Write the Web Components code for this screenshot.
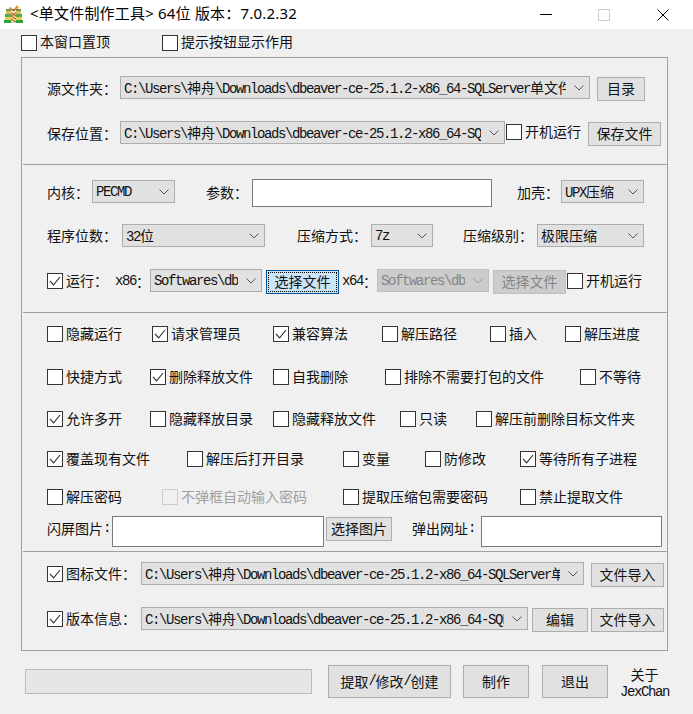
<!DOCTYPE html>
<html lang="zh"><head><meta charset="utf-8"><title>单文件制作工具</title>
<style>
html,body{margin:0;padding:0;background:#f0f0f0}
body{width:693px;height:714px;overflow:hidden;font:14px/20px "Liberation Mono","Noto Sans CJK SC",monospace;letter-spacing:-1.4px;color:#111}
</style></head><body>
<x-titlebar>&lt;单文件制作工具&gt; 64位 版本：7.0.2.32</x-titlebar>
<x-row style="margin:6px 0 6px 21px;height:16px;--lift:2px">
 <x-check style="width:141px">本窗口置顶</x-check><x-check>提示按钮显示作用</x-check>
</x-row>
<x-panel>
 <x-section style="padding-top:18px;padding-bottom:18px" line>
  <x-row><x-label style="width:73px;height:25px">源文件夹：</x-label><x-combo style="width:470px">C:\Users\神舟\Downloads\dbeaver-ce-25.1.2-x86_64-SQLServer单文件</x-combo><x-btn style="width:48px;margin:1px 0 0 7px">目录</x-btn></x-row>
  <x-row style="margin-top:20px"><x-label style="width:73px;height:25px">保存位置：</x-label><x-combo style="width:385px">C:\Users\神舟\Downloads\dbeaver-ce-25.1.2-x86_64-SQ</x-combo><x-check style="width:82px;margin:3px 0 0 1px">开机运行</x-check><x-btn style="width:73px;margin-top:1px">保存文件</x-btn></x-row>
 </x-section>
 <x-section style="padding-top:14px;padding-bottom:18px" line>
  <x-row><x-label style="width:45px;height:27px">内核：</x-label><x-combo style="width:83px;margin-top:1px">PECMD</x-combo><x-label style="width:46px;height:27px;margin-left:31px">参数：</x-label><x-input style="width:240px;height:28px"></x-input><x-label style="width:44px;height:27px;margin-left:25px">加壳：</x-label><x-combo style="width:83px;margin-top:1px">UPX压缩</x-combo></x-row>
  <x-row style="margin-top:17px"><x-label style="width:75px;height:24px">程序位数：</x-label><x-combo style="width:143px">32位</x-combo><x-label style="width:74px;height:24px;margin-left:32px">压缩方式：</x-label><x-combo style="width:62px">7z</x-combo><x-label style="width:74px;height:24px;margin-left:30px">压缩级别：</x-label><x-combo style="width:107px">极限压缩</x-combo></x-row>
  <x-row style="margin-top:21px"><x-check checked style="width:68px;margin-top:4px">运行：</x-check><x-label style="width:35px;height:25px">x86：</x-label><x-combo style="width:112px">Softwares\db</x-combo><x-btn focus style="width:73px;margin:1px 0 0 4px">选择文件</x-btn><x-label style="width:35px;height:25px;margin-left:3px">x64：</x-label><x-combo disabled style="width:112px">Softwares\db</x-combo><x-btn disabled style="width:73px;margin:1px 0 0 4px">选择文件</x-btn><x-check style="width:75px;margin:4px 0 0 1px">开机运行</x-check></x-row>
 </x-section>
 <x-section style="padding-top:13px;padding-bottom:4px" line>
  <x-row><x-check style="width:105px">隐藏运行</x-check><x-check checked style="width:121px">请求管理员</x-check><x-check checked style="width:109px">兼容算法</x-check><x-check style="width:108px">解压路径</x-check><x-check style="width:75px">插入</x-check><x-check>解压进度</x-check></x-row>
  <x-row style="margin-top:27px"><x-check style="width:103px">快捷方式</x-check><x-check checked style="width:123px">删除释放文件</x-check><x-check style="width:112px">自我删除</x-check><x-check style="width:195px">排除不需要打包的文件</x-check><x-check>不等待</x-check></x-row>
  <x-row style="margin-top:26px"><x-check checked style="width:103px">允许多开</x-check><x-check style="width:123px">隐藏释放目录</x-check><x-check style="width:127px">隐藏释放文件</x-check><x-check style="width:76px">只读</x-check><x-check>解压前删除目标文件夹</x-check></x-row>
  <x-row style="margin-top:24px"><x-check checked style="width:140px">覆盖现有文件</x-check><x-check style="width:156px">解压后打开目录</x-check><x-check style="width:82px">变量</x-check><x-check style="width:95px">防修改</x-check><x-check checked>等待所有子进程</x-check></x-row>
  <x-row style="margin-top:22px"><x-check style="width:115px">解压密码</x-check><x-check disabled style="width:181px">不弹框自动输入密码</x-check><x-check style="width:177px">提取压缩包需要密码</x-check><x-check>禁止提取文件</x-check></x-row>
  <x-row style="margin-top:11px"><x-label style="width:65px;height:26px">闪屏图片:</x-label><x-input style="width:212px;height:31px"></x-input><x-btn style="width:66px;margin:1px 0 0 2px">选择图片</x-btn><x-label style="width:69px;height:26px;margin-left:20px">弹出网址:</x-label><x-input style="width:181px;height:31px"></x-input></x-row>
 </x-section>
 <x-section style="padding-top:10px;padding-bottom:18px">
  <x-row><x-check checked style="width:94px;margin-top:4px">图标文件：</x-check><x-combo style="width:443px">C:\Users\神舟\Downloads\dbeaver-ce-25.1.2-x86_64-SQLServer单</x-combo><x-btn style="width:73px;margin:1px 0 0 7px">文件导入</x-btn></x-row>
  <x-row style="margin-top:20px"><x-check checked style="width:94px;margin-top:4px">版本信息：</x-check><x-combo style="width:387px">C:\Users\神舟\Downloads\dbeaver-ce-25.1.2-x86_64-SQL</x-combo><x-btn style="width:56px;margin:1px 0 0 4px">编辑</x-btn><x-btn style="width:73px;margin:1px 0 0 3px">文件导入</x-btn></x-row>
 </x-section>
</x-panel>
<x-row style="margin:14px 0 0 25px"><x-progress style="width:287px;margin-top:4px"></x-progress><x-btn style="width:123px;height:33px;margin-left:16px">提取/修改/创建</x-btn><x-btn style="width:66px;height:33px;margin-left:12px">制作</x-btn><x-btn style="width:66px;height:33px;margin-left:13px">退出</x-btn><x-about style="margin:1px 0 0 12px">关于<br>JexChan</x-about></x-row>
<script>
const shell=(el,css,html='<slot></slot>')=>{const r=el.attachShadow({mode:'open'});r.innerHTML='<style>'+css+'</style>'+html;return r};
const zhify=el=>{for(const n of [...el.childNodes]){if(n.nodeType!==3)continue;const f=document.createDocumentFragment();
  n.data.split(/([^\x00-\x7f]+)/).forEach((p,i)=>{if(!p)return;if(i%2){const z=document.createElement('x-zh');z.textContent=p;f.append(z)}else f.append(p)});n.replaceWith(f)}};
class Zh extends HTMLElement{constructor(){super();shell(this,':host{font-family:"Noto Sans CJK SC","Noto Sans CJK JP",sans-serif;font-size:14px;letter-spacing:0}')}}
class Plain extends HTMLElement{css(){return ''} html(){return undefined}
  connectedCallback(){if(this.shadowRoot)return;zhify(this);shell(this,this.css(),this.html())}}
class Row extends Plain{css(){return ':host{display:flex;align-items:flex-start}'}}
class Panel extends Plain{css(){return ':host{display:block;box-sizing:border-box;margin-left:21px;width:647px;height:594px;border:1px solid #a0a0a0}'}}
class Section extends Plain{css(){return ':host{display:block;margin-left:1px;padding-left:24px;box-sizing:border-box}:host([line]){border-bottom:1px solid #a0a0a0}'}}
class Label extends Plain{css(){return ':host{display:flex;align-items:center;flex:none;box-sizing:border-box;padding-bottom:2px;white-space:nowrap}'}}
class Btn extends Plain{css(){return `:host{display:flex;align-items:center;justify-content:center;flex:none;box-sizing:border-box;height:24px;padding-bottom:2px;background:#e1e1e1;border:1px solid #adadad;white-space:nowrap;position:relative}
  :host([disabled]){background:#ccc;border-color:#bfbfbf;color:#858585}
  :host([focus]){background:#cce4f7;border-color:#005499}
  :host([focus])::after{content:"";position:absolute;inset:1px;border:1px dotted #000}`}}
class Input extends Plain{css(){return ':host{display:block;flex:none;box-sizing:border-box;background:#fff;border:1px solid #7a7a7a}'}}
class Progress extends Plain{css(){return ':host{display:block;flex:none;box-sizing:border-box;height:25px;background:#e6e6e6;border:1px solid #bcbcbc}'}}
class Combo extends Plain{css(){return `:host{display:flex;align-items:center;flex:none;box-sizing:border-box;height:23px;padding:0 5px 0 3px;background:#e1e1e1;border:1px solid #adadad}
  :host([disabled]){background:#ccc;border-color:#bfbfbf;color:#858585}
  .t{flex:1;min-width:0;overflow:hidden;white-space:nowrap;margin-right:8px}
  svg{flex:none;width:10px;height:6px;stroke:#555;fill:none}
  :host([disabled]) svg{stroke:#9a9a9a}`}
  html(){return '<div class="t"><slot></slot></div><svg viewBox="0 0 10 6"><path d="M.5.5 5 5 9.500.5"/></svg>'}}
class Check extends Plain{css(){return `:host{display:flex;align-items:center;flex:none;height:16px;white-space:nowrap}
  .b{flex:none;box-sizing:border-box;width:16px;height:16px;border:1px solid #333;background:#fff;margin-right:3px;display:block}
  .l{padding-bottom:var(--lift,1px)}
  svg{display:none;width:14px;height:14px;fill:none;stroke:#333;stroke-width:1.1}
  :host([checked]) svg{display:block}
  :host([disabled]){color:#a0a0a0}
  :host([disabled]) .b{border-color:#ccc;background:#f0f0f0}`}
  html(){return '<span class="b"><svg viewBox="0 0 14 14"><path d="M2 7l3.600 3.800L12 3"/></svg></span><span class="l"><slot></slot></span>'}}
class About extends Plain{css(){return ':host{display:block;flex:none;width:49px;text-align:center;line-height:16px;white-space:nowrap}'}}
class Titlebar extends Plain{
  connectedCallback(){if(this.shadowRoot)return;shell(this,this.css(),this.html())}
  css(){return `:host{display:flex;align-items:center;height:29px;background:#fff;color:#000;letter-spacing:.2px;font:15px/20px "Noto Sans","Noto Sans CJK SC",sans-serif;white-space:nowrap}
  .i{flex:none;width:19px;height:19px;margin:0 7px 0 4px}.t{flex:1;min-width:0;padding-bottom:3px}
  .c{flex:none;width:12px;height:12px;fill:none}`}
  html(){return `<svg class="i" viewBox="0 0 19 19">
   <rect x="0" y="15" width="19" height="3" fill="#2f9e44"/><rect x="1" y="12" width="17" height="3" fill="#e6d24a"/><rect x="1" y="9" width="17" height="3" fill="#58a858"/><rect x="2" y="6" width="15" height="3" fill="#d8c060"/>
   <rect x="2" y="4" width="15" height="2" fill="#7a8a50"/>
   <path d="M7 18V5h5v13z" fill="#e8d8b0"/><path d="M7 8l5 3M7 11l5 3M7 14l5 3M12 8l-5 3" stroke="#c06a20" stroke-width="1.2"/>
   <path d="M9.500 5 6 1.500 5 4zM9.500 5 13 0l2 3z" fill="#e8902a"/><path d="M8.500 4h2v2h-2z" fill="#a04a10"/></svg>
   <div class="t"><slot></slot></div>
   <svg class="c" viewBox="0 0 12 12" style="margin-bottom:1px"><path d="M0 6.500H12" stroke="#000"/></svg>
   <svg class="c" viewBox="0 0 12 12" style="margin-left:46px"><rect x=".5" y=".5" width="11" height="11" stroke="#ccc"/></svg>
   <svg class="c" viewBox="0 0 12 12" style="margin:0 24px 0 47px"><path d="M.5.500 11.500 11.500M11.500.500.500 11.500" stroke="#000"/></svg>`}}
customElements.define('x-zh',Zh);
const defs={'x-row':Row,'x-panel':Panel,'x-section':Section,'x-label':Label,'x-btn':Btn,'x-input':Input,'x-progress':Progress,'x-combo':Combo,'x-check':Check,'x-about':About,'x-titlebar':Titlebar};
for(const k in defs) customElements.define(k,defs[k]);
</script>
</body></html>
